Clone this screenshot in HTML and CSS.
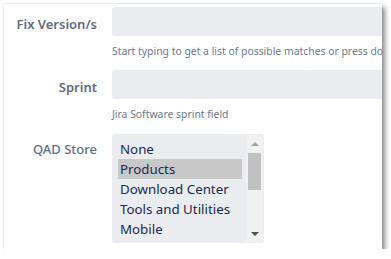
FILE: index.html
```html
<!DOCTYPE html>
<html>
<head>
<meta charset="utf-8">
<link rel="stylesheet" href="styles.css">
</head>
<body>
<div class="card">
  <div class="row row-fix">
    <div class="label">Fix Version/s</div>
    <div class="field">
      <div class="input"></div>
      <div class="help">Start typing to get a list of possible matches or press down to select.</div>
    </div>
  </div>
  <div class="row row-sprint">
    <div class="label">Sprint</div>
    <div class="field">
      <div class="input"></div>
      <div class="help">Jira Software sprint field</div>
    </div>
  </div>
  <div class="row row-store">
    <div class="label">QAD Store</div>
    <div class="field">
      <div class="listbox">
        <div class="options">
          <div class="option">None</div>
          <div class="option selected">Products</div>
          <div class="option">Download Center</div>
          <div class="option">Tools and Utilities</div>
          <div class="option">Mobile</div>
        </div>
        <div class="scrollbar">
          <div class="arrow up"></div>
          <div class="track"><div class="thumb"></div></div>
          <div class="arrow down"></div>
        </div>
      </div>
    </div>
  </div>
</div>
</body>
</html>
```
FILE: styles.css
```css
html, body {
  margin: 0;
  padding: 0;
  background: #ffffff;
}
body {
  padding: 4px 0 0 4px;
  font-family: "Noto Sans", "Open Sans", sans-serif;
}
.card {
  width: 378px;
  height: 245px;
  background: #ffffff;
  box-shadow: 3px 3px 5px rgba(0, 0, 0, 0.45), 0 0 2px rgba(0, 0, 0, 0.12);
  overflow: hidden;
  box-sizing: border-box;
  padding-top: 3px;
}
.row {
  display: grid;
  grid-template-columns: 93px 1fr;
  column-gap: 15px;
}
.label {
  text-align: right;
  font-size: 13px;
  font-weight: 600;
  color: #5e6c84;
  line-height: 20px;
  padding-top: 7px;
  white-space: nowrap;
}
.field {
  min-width: 0;
}
.input {
  width: 300px;
  height: 29px;
  background: #ebecf0;
  border-radius: 3px;
}
.help {
  font-size: 10.4px;
  color: #6b778c;
  line-height: 16px;
  margin-top: 7px;
  white-space: nowrap;
}
.row-sprint {
  margin-top: 11px;
}
.row-store {
  margin-top: 12px;
}
.row-store .label {
  padding-top: 5px;
  font-weight: 500;
}
.listbox {
  width: 152px;
  height: 109px;
  background: #ebecf0;
  border-radius: 3px;
  display: flex;
  box-sizing: border-box;
  padding: 1px 1px 1px 6px;
}
.options {
  flex: 1;
  padding-top: 4px;
  overflow: hidden;
}
.option {
  font-size: 13.3px;
  line-height: 20px;
  height: 20px;
  color: #172b4d;
  padding-left: 2px;
  white-space: nowrap;
}
.option.selected {
  background: #c8c8c8;
}
.scrollbar {
  width: 17px;
  margin-left: 4px;
  background: #f1f1f1;
  display: flex;
  flex-direction: column;
}
.arrow {
  height: 17px;
  display: flex;
  align-items: center;
  justify-content: center;
}
.arrow::before {
  content: "";
  width: 0;
  height: 0;
  border-left: 4px solid transparent;
  border-right: 4px solid transparent;
}
.arrow.up::before {
  border-bottom: 4px solid #a3a3a3;
}
.arrow.down::before {
  border-top: 4px solid #505050;
}
.track {
  flex: 1;
  padding: 0 2px;
}
.thumb {
  height: 37px;
  margin-top: 1px;
  background: #c1c1c1;
}
```
